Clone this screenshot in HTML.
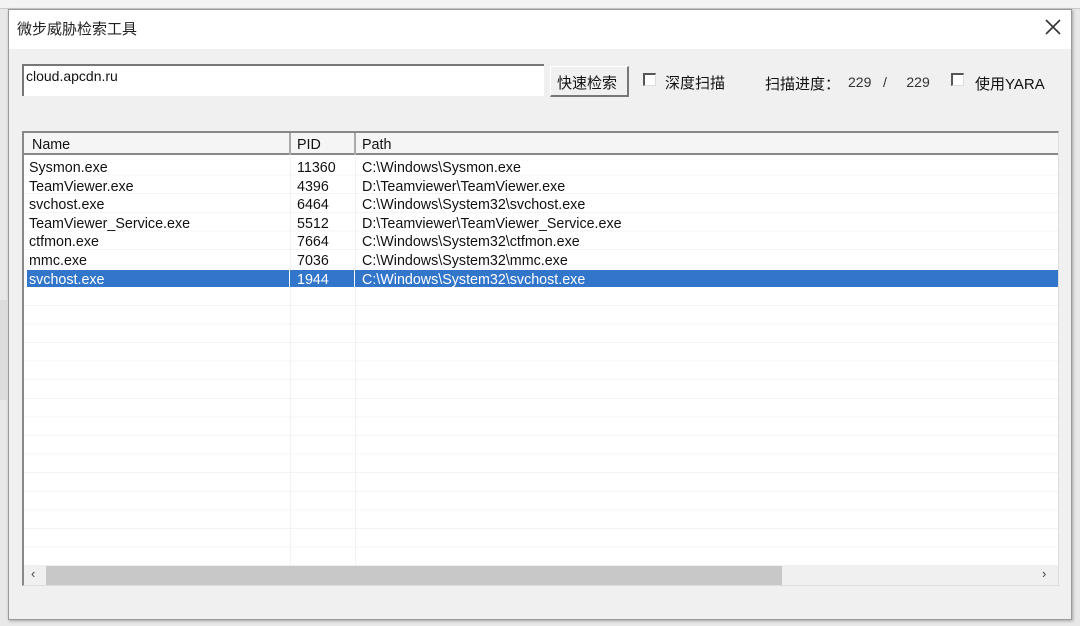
<!DOCTYPE html>
<html><head><meta charset="utf-8"><style>
*{margin:0;padding:0;box-sizing:border-box}
body{width:1080px;height:626px;overflow:hidden;background:#e8e8e8;font-family:"Liberation Sans","Noto Sans CJK SC",sans-serif;font-size:13px;color:#111;position:relative}
.abs{position:absolute}
#win{left:8px;top:9px;width:1064px;height:611px;background:#f0f0f0;border:1px solid #9a9a9a;box-shadow:1px 1px 3px rgba(0,0,0,.3)}
#title{left:0;top:0;width:1062px;height:39px;background:#fff}
.t{white-space:nowrap}
#list{left:22px;top:131px;width:1037px;height:455px;background:#fff;border-top:2px solid #888;border-left:2px solid #888;border-right:1px solid #ddd;border-bottom:1px solid #ddd;overflow:hidden;font-size:14.3px}
#rows{left:0;top:24px;width:1034px;height:408px;background:repeating-linear-gradient(to bottom,transparent 0,transparent 17.6px,#f4f4f4 17.6px,#f4f4f4 18.6px)}
.cb{width:13px;height:13px;border-top:2px solid #555;border-left:2px solid #555;background:#fff;border-right:1px solid #ddd;border-bottom:1px solid #ddd}
</style></head><body>
<div class="abs" style="left:0;top:0;width:1080px;height:9px;background:#f3f3f3;border-bottom:1px solid #ccc"></div>
<div class="abs" style="left:0;top:300px;width:7px;height:100px;background:#ddd"></div>
<div id="win" class="abs">
 <div id="title" class="abs"></div>
</div>
<div class="abs t" style="left:17px;top:18px;font-size:15px;color:#222">微步威胁检索工具</div>
<svg class="abs" style="left:1045px;top:19px" width="16" height="16"><path d="M1 1L15 15M15 1L1 15" stroke="#333" stroke-width="1.6"/></svg>

<div class="abs" style="left:22px;top:64px;width:522px;height:32px;background:#fff;border-top:2px solid #777;border-left:2px solid #777"></div>
<div class="abs t" style="left:26px;top:68px;font-size:14px">cloud.apcdn.ru</div>
<div class="abs" style="left:550px;top:66px;width:79px;height:31px;background:#f0f0f0;border:1px solid #fff;border-right:2px solid #777;border-bottom:2px solid #777"></div>
<div class="abs t" style="left:557px;top:72px;font-size:15px">快速检索</div>
<div class="abs cb" style="left:643px;top:73px"></div>
<div class="abs t" style="left:665px;top:72px;font-size:15px">深度扫描</div>
<div class="abs t" style="left:765px;top:73px;font-size:15px">扫描进度：</div>
<div class="abs t" style="left:848px;top:74px;font-size:14px;color:#333">229&nbsp;&nbsp;&nbsp;/&nbsp;&nbsp;&nbsp;&nbsp;&nbsp;229</div>
<div class="abs cb" style="left:951px;top:73px"></div>
<div class="abs t" style="left:975px;top:73px;font-size:15px">使用YARA</div>

<div id="list" class="abs">
 <div class="abs" style="left:0;top:0;width:1034px;height:22px;background:#f5f5f5;border-bottom:2px solid #888"></div>
 <div class="abs" style="left:265px;top:0;width:2px;height:22px;background:#aaa"></div>
 <div class="abs" style="left:330px;top:0;width:2px;height:22px;background:#aaa"></div>
 <div class="abs t" style="left:8px;top:4px">Name</div>
 <div class="abs t" style="left:273px;top:4px">PID</div>
 <div class="abs t" style="left:338px;top:4px">Path</div>
 <div id="rows" class="abs"></div>
 <div class="abs" style="left:266px;top:24px;width:1px;height:408px;background:#f2f2f2"></div>
 <div class="abs" style="left:331px;top:24px;width:1px;height:408px;background:#f2f2f2"></div>
 <div class="abs" style="left:3px;top:137px;width:1031px;height:17px;background:#3276cc"></div>
 <div class="abs" style="left:265px;top:137px;width:1px;height:17px;background:#fff"></div>
 <div class="abs" style="left:330px;top:137px;width:1px;height:17px;background:#fff"></div>
 <div class="abs t" style="left:5px;top:26px;line-height:18.6px">Sysmon.exe<br>TeamViewer.exe<br>svchost.exe<br>TeamViewer_Service.exe<br>ctfmon.exe<br>mmc.exe<br><span style="color:#fff">svchost.exe</span></div>
 <div class="abs t" style="left:273px;top:26px;line-height:18.6px">11360<br>4396<br>6464<br>5512<br>7664<br>7036<br><span style="color:#fff">1944</span></div>
 <div class="abs t" style="left:338px;top:26px;line-height:18.6px">C:\Windows\Sysmon.exe<br>D:\Teamviewer\TeamViewer.exe<br>C:\Windows\System32\svchost.exe<br>D:\Teamviewer\TeamViewer_Service.exe<br>C:\Windows\System32\ctfmon.exe<br>C:\Windows\System32\mmc.exe<br><span style="color:#fff">C:\Windows\System32\svchost.exe</span></div>
 <div class="abs" style="left:0;top:432px;width:1034px;height:21px;background:#f0f0f0"></div>
 <div class="abs" style="left:22px;top:433px;width:736px;height:19px;background:#c8c8c8"></div>
 <div class="abs t" style="left:7px;top:433px;font-size:13px;color:#444">‹</div>
 <div class="abs t" style="left:1018px;top:433px;font-size:13px;color:#444">›</div>
</div>
</body></html>
